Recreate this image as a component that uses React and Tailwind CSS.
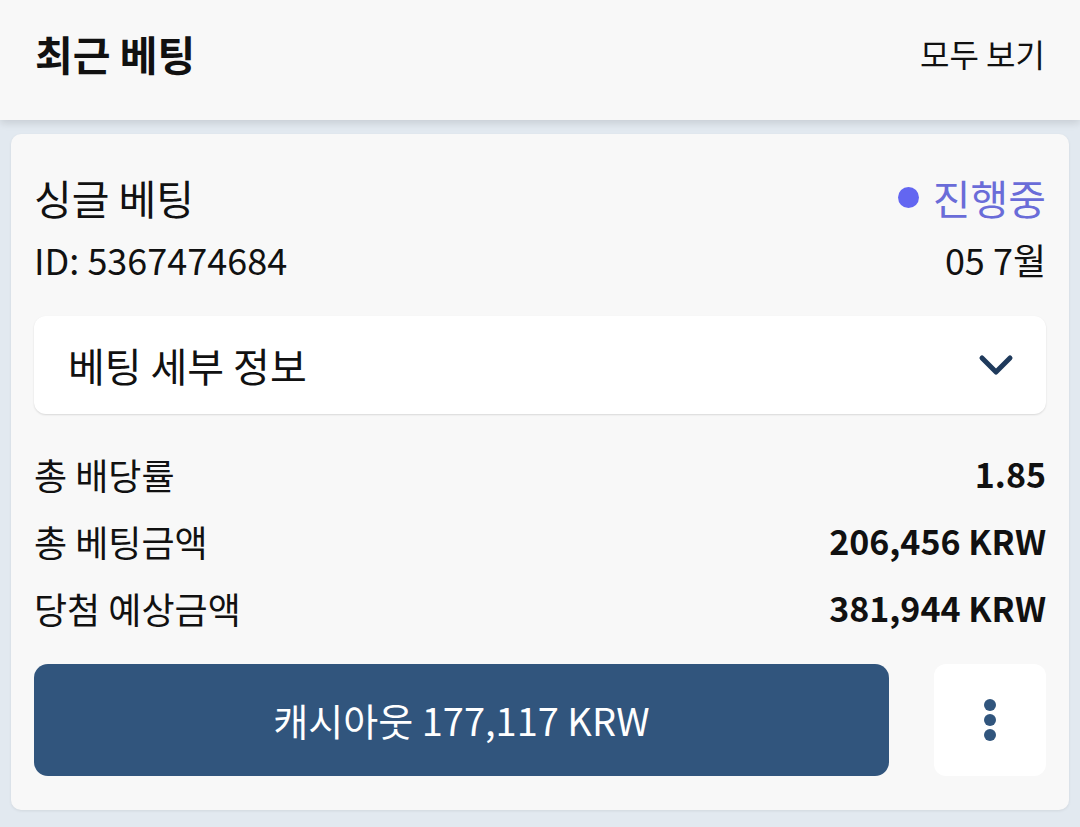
import React from 'react';

export default function App() {
  const rows = [
    { label: '총 배당률', value: '1.85' },
    { label: '총 베팅금액', value: '206,456 KRW' },
    { label: '당첨 예상금액', value: '381,944 KRW' },
  ];

  return (
    <div className="min-h-[827px] bg-[#e2e9f0] font-['Noto_Sans_CJK_KR','Noto_Sans',sans-serif] text-[#111]">
      {/* Header */}
      <div className="relative z-10 h-[120px] bg-[#f8f8f8] flex items-center justify-between px-[35px] pb-[14px] shadow-[0_3px_8px_rgba(0,0,0,0.12)]">
        <h1 className="text-[41px] font-bold leading-none">최근 베팅</h1>
        <button className="text-[32px] leading-none">모두 보기</button>
      </div>

      {/* Card */}
      <div className="px-[11px] pt-[14px]">
        <div className="bg-[#f8f8f8] rounded-[10px] px-[23px] pt-[37px] pb-[34px] shadow-[0_1px_3px_rgba(0,0,0,0.08)]">
          <div className="h-[52px] flex items-center justify-between">
            <span className="text-[41px] leading-none">싱글 베팅</span>
            <span className="flex items-center gap-[14px] text-[41px] leading-none text-[#6a6cd8]">
              <span className="w-[21px] h-[21px] rounded-full bg-[#6366f1]" />
              진행중
            </span>
          </div>
          <div className="mt-[14px] h-[44px] flex items-center justify-between text-[36px] leading-none">
            <span>ID: 5367474684</span>
            <span>05 7월</span>
          </div>

          <div className="mt-[35px] h-[98px] bg-white rounded-[12px] flex items-center justify-between pl-[34px] pr-[32px] shadow-[0_1px_2px_rgba(0,0,0,0.13)]">
            <span className="text-[40px] leading-none">베팅 세부 정보</span>
            <svg width="36" height="22" viewBox="0 0 36 22" fill="none">
              <polyline points="4,4 18,18 32,4" stroke="#1f3a5c" strokeWidth="5" strokeLinecap="round" strokeLinejoin="round" />
            </svg>
          </div>

          <div className="mt-[26px]">
            {rows.map((r) => (
              <div key={r.label} className="h-[67px] flex items-center justify-between leading-none">
                <span className="text-[36px]">{r.label}</span>
                <span className="text-[34px] font-bold">{r.value}</span>
              </div>
            ))}
          </div>

          <div className="mt-[23px] flex gap-[45px]">
            <button className="flex-1 h-[112px] rounded-[14px] bg-[#31557d] text-white text-[38px] leading-none flex items-center justify-center">
              캐시아웃 177,117 KRW
            </button>
            <button className="w-[112px] h-[112px] rounded-[12px] bg-white flex flex-col items-center justify-center gap-[3px]">
              <span className="w-[12px] h-[12px] rounded-full bg-[#31557d]" />
              <span className="w-[12px] h-[12px] rounded-full bg-[#31557d]" />
              <span className="w-[12px] h-[12px] rounded-full bg-[#31557d]" />
            </button>
          </div>
        </div>
      </div>
    </div>
  );
}
